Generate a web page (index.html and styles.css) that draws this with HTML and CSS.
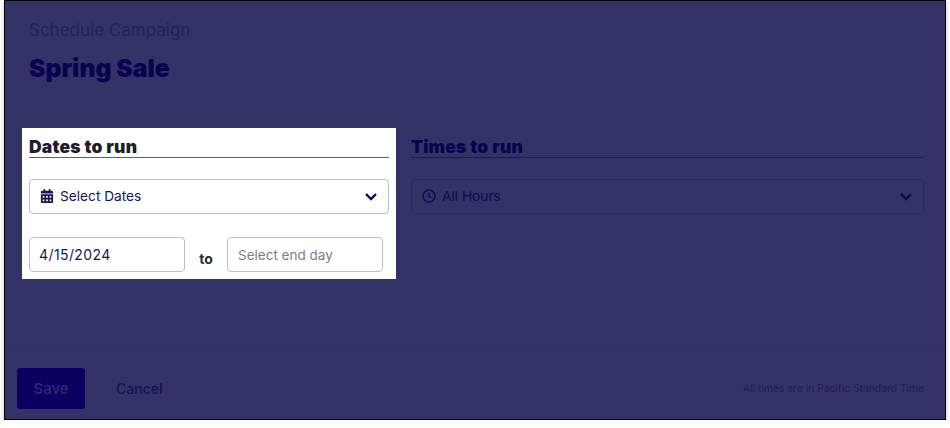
FILE: index.html
```html
<!DOCTYPE html>
<html lang="en">
<head>
    <meta charset="UTF-8">
    <title>Schedule Campaign</title>
    <link rel="stylesheet" href="styles.css">
</head>
<body>
    <div class="frame">
        <header class="header">
            <div class="eyebrow">Schedule Campaign</div>
            <h1 class="title">Spring Sale</h1>
        </header>

        <main class="columns">
            <section class="panel panel-dates">
                <h2 class="panel-title">Dates to run</h2>
                <div class="dropdown">
                    <svg class="icon" viewBox="0 0 448 512"><path fill="currentColor" d="M0 464c0 26.500 21.500 48 48 48h352c26.500 0 48-21.500 48-48V192H0v272zm320-196c0-6.600 5.400-12 12-12h40c6.600 0 12 5.400 12 12v40c0 6.600-5.400 12-12 12h-40c-6.600 0-12-5.400-12-12v-40zm0 128c0-6.600 5.400-12 12-12h40c6.600 0 12 5.400 12 12v40c0 6.600-5.400 12-12 12h-40c-6.600 0-12-5.400-12-12v-40zM192 268c0-6.600 5.400-12 12-12h40c6.600 0 12 5.400 12 12v40c0 6.600-5.400 12-12 12h-40c-6.600 0-12-5.400-12-12v-40zm0 128c0-6.600 5.400-12 12-12h40c6.600 0 12 5.400 12 12v40c0 6.600-5.400 12-12 12h-40c-6.600 0-12-5.400-12-12v-40zM64 268c0-6.600 5.400-12 12-12h40c6.600 0 12 5.400 12 12v40c0 6.600-5.400 12-12 12H76c-6.600 0-12-5.400-12-12v-40zm0 128c0-6.600 5.400-12 12-12h40c6.600 0 12 5.400 12 12v40c0 6.600-5.400 12-12 12H76c-6.600 0-12-5.400-12-12v-40zM400 64h-48V16c0-8.800-7.200-16-16-16h-32c-8.800 0-16 7.200-16 16v48H160V16c0-8.800-7.200-16-16-16h-32c-8.800 0-16 7.200-16 16v48H48C21.500 64 0 85.500 0 112v48h448v-48c0-26.500-21.500-48-48-48z"/></svg>
                    <span class="dropdown-label">Select Dates</span>
                    <svg class="chevron" viewBox="0 0 14 9"><path d="M2 2 7 7l5-5" fill="none" stroke="currentColor" stroke-width="2.400"/></svg>
                </div>
                <div class="date-row">
                    <input class="date-input" type="text" value="4/15/2024">
                    <span class="to">to</span>
                    <input class="date-input" type="text" placeholder="Select end day">
                </div>
            </section>

            <section class="panel panel-times">
                <h2 class="panel-title">Times to run</h2>
                <div class="dropdown">
                    <svg class="icon" viewBox="0 0 16 16"><circle cx="8" cy="8" r="6.800" fill="none" stroke="currentColor" stroke-width="1.700"/><path d="M8 4v4.300l2.600 1.700" fill="none" stroke="currentColor" stroke-width="1.700"/></svg>
                    <span class="dropdown-label">All Hours</span>
                    <svg class="chevron" viewBox="0 0 14 9"><path d="M2 2 7 7l5-5" fill="none" stroke="currentColor" stroke-width="2.400"/></svg>
                </div>
            </section>
        </main>

        <footer class="footer">
            <button class="save">Save</button>
            <a class="cancel">Cancel</a>
            <span class="note">All times are in Pacific Standard Time</span>
        </footer>
    </div>
</body>
</html>
```

FILE: styles.css
```css
body {
    margin: 0;
    background-color: #fff;
    font-family: "Inter", "Liberation Sans", sans-serif;
}

.frame {
    box-sizing: border-box;
    width: 942px;
    height: 420px;
    margin-left: 4px;
    display: flex;
    flex-direction: column;
    background-color: #333267;
    border: 1px solid #000;
    box-shadow: 0 2px 4px rgba(0, 0, 0, 0.25);
}

.header {
    padding: 18px 23px 0 24px;
    height: 109px;
    box-sizing: border-box;
}

.eyebrow {
    font-size: 17px;
    line-height: 22px;
    color: #22205c;
}

.title {
    margin: 12px 0 0;
    font-size: 24.700px;
    line-height: 30px;
    font-weight: 900;
    color: #07034f;
}

.columns {
    flex: 1;
    display: flex;
    gap: 8px;
    padding: 18px 14px 0 17px;
    border-bottom: 1px solid #312f61;
}

.panel {
    box-sizing: border-box;
    height: 151px;
    padding: 7px;
}

.panel-dates {
    width: 374px;
    background-color: #fff;
    color: #1a1654;
}

.panel-times {
    flex: 1;
    color: #0e0a55;
}

.panel-title {
    box-sizing: border-box;
    margin: 0;
    height: 23px;
    font-size: 17.500px;
    line-height: 24px;
    font-weight: 900;
    letter-spacing: 0.2px;
    color: #1d1d2b;
    border-bottom: 1px solid #5e5e6e;
}

.panel-times .panel-title {
    color: #07034f;
    border-bottom-color: #1c1959;
}

.dropdown {
    box-sizing: border-box;
    height: 35px;
    margin-top: 21px;
    padding: 0 10px 1px 10px;
    display: flex;
    align-items: center;
    gap: 6px;
    border: 1px solid #bdbdc4;
    border-radius: 4px;
    font-size: 13.700px;
}

.panel-times .dropdown {
    border-color: #2a2860;
}

.icon {
    width: 14px;
    height: 14px;
}

.dropdown-label {
    flex: 1;
}

.chevron {
    width: 14px;
    height: 9px;
    color: #0b0752;
}

.date-row {
    margin-top: 23px;
    display: flex;
    align-items: flex-end;
}

.date-input {
    box-sizing: border-box;
    width: 156px;
    height: 35px;
    padding: 0 9px;
    border: 1px solid #bdbdc4;
    border-radius: 4px;
    font-family: "Inter", sans-serif;
    font-size: 14px;
    letter-spacing: 0.4px;
    color: #1a1654;
}

.date-input:last-child {
    padding-left: 10px;
}

.date-input::placeholder {
    color: #7d7d86;
    font-size: 13.500px;
    letter-spacing: 0;
}

.to {
    width: 42px;
    text-align: center;
    font-size: 14px;
    font-weight: 700;
    line-height: 27px;
    color: #2a2a38;
}

.footer {
    height: 71px;
    box-sizing: border-box;
    padding: 20px 21px 0 12px;
    display: flex;
    align-items: flex-start;
}

.save {
    width: 68px;
    height: 41px;
    border: none;
    border-radius: 3px;
    background-color: #0a0060;
    color: #2f2d70;
    font-family: "Inter", sans-serif;
    font-size: 15px;
    font-weight: 500;
}

.cancel {
    margin-left: 31px;
    line-height: 41px;
    font-size: 14px;
    font-weight: 500;
    color: #141059;
}

.note {
    margin-left: auto;
    line-height: 41px;
    font-size: 10.300px;
    color: #1f1c5c;
}
```
